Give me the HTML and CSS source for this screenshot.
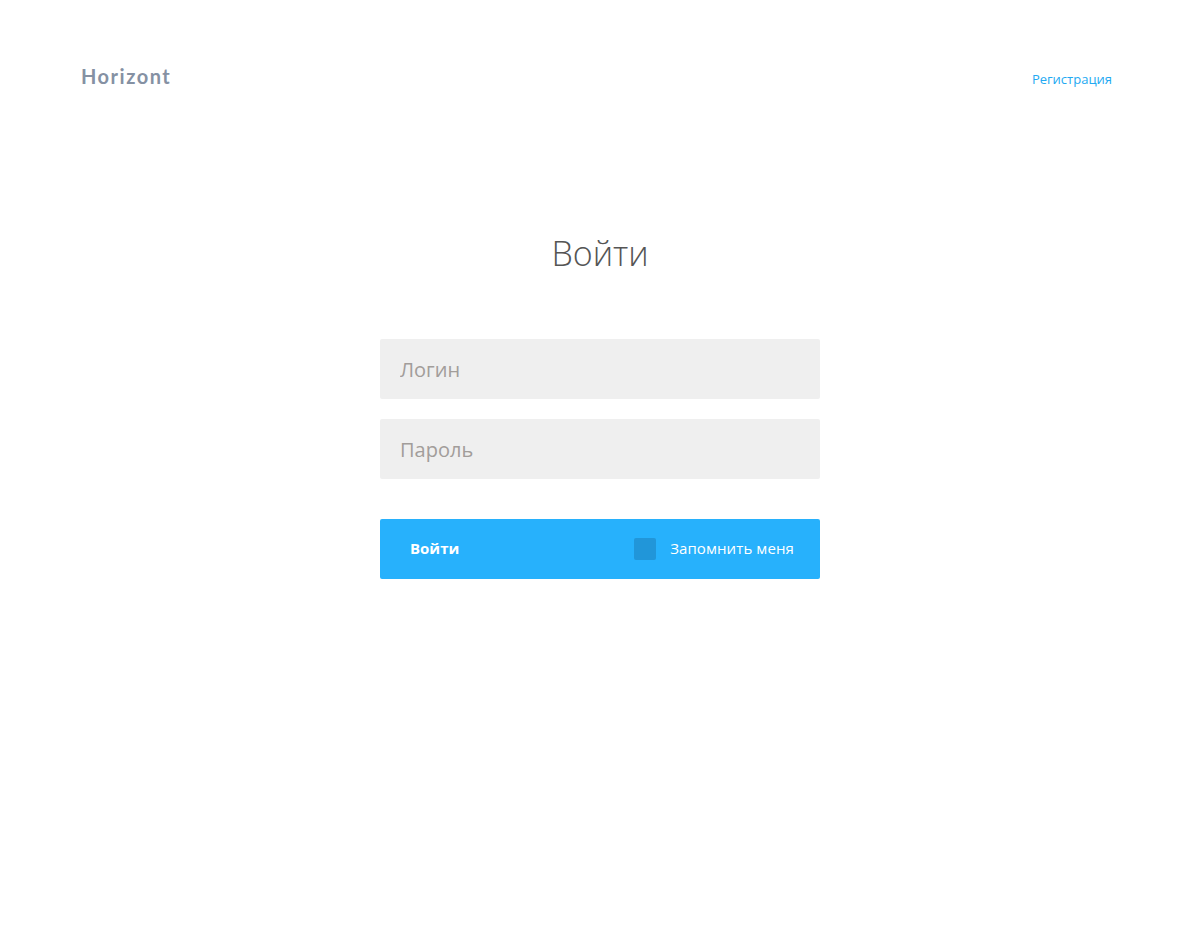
FILE: index.html
```html
<!DOCTYPE html>
<html lang="ru">
<head>
<meta charset="utf-8">
<title>Horizont — Войти</title>
<link rel="stylesheet" href="styles.css">
</head>
<body>
<header class="header">
  <div class="logo">Horizont</div>
  <a class="reg-link" href="#">Регистрация</a>
</header>
<main class="main">
  <h1 class="title">Войти</h1>
  <form class="form">
    <input class="field" type="text" placeholder="Логин">
    <input class="field" type="password" placeholder="Пароль">
    <div class="submit-bar">
      <button class="submit" type="button">Войти</button>
      <label class="remember"><span class="check"></span>Запомнить меня</label>
    </div>
  </form>
</main>
</body>
</html>
```

FILE: styles.css
```css
html, body {
  margin: 0;
  padding: 0;
  background: #fff;
  font-family: "Open Sans", "Liberation Sans", sans-serif;
}
.header {
  display: flex;
  justify-content: space-between;
  align-items: center;
  padding: 64px 88px 0 81px;
  height: 26px;
}
.logo {
  font-family: "Lato", "Liberation Sans", sans-serif;
  font-weight: 700;
  font-size: 20px;
  letter-spacing: 1.5px;
  color: #8591a3;
  margin-top: -3px;
}
.reg-link {
  font-size: 13px;
  color: #23a9f2;
  text-decoration: none;
  margin-top: 4px;
}
.main {
  display: flex;
  flex-direction: column;
  align-items: center;
}
.title {
  margin: 139px 0 0;
  font-weight: 300;
  font-size: 34px;
  line-height: 48px;
  color: #555;
}
.form {
  width: 440px;
  margin-top: 62px;
  display: flex;
  flex-direction: column;
}
.field {
  height: 60px;
  box-sizing: border-box;
  border: none;
  border-radius: 2px;
  background: #efefef;
  padding: 0 20px;
  font-family: "Open Sans", sans-serif;
  font-size: 20px;
  color: #555;
  margin-bottom: 20px;
  outline: none;
}
.field::placeholder {
  color: #a29d9a;
}
.submit-bar {
  margin-top: 20px;
  height: 60px;
  box-sizing: border-box;
  padding: 0 26px 2px 30px;
  background: #27b1fc;
  border-radius: 2px;
  display: flex;
  align-items: center;
  justify-content: space-between;
}
.submit {
  background: none;
  border: none;
  padding: 0;
  font-family: "Open Sans", sans-serif;
  font-weight: 700;
  font-size: 15px;
  color: #fff;
  cursor: pointer;
}
.remember {
  display: flex;
  align-items: center;
  font-size: 15px;
  letter-spacing: 0.1px;
  color: #fff;
}
.check {
  width: 22px;
  height: 22px;
  border-radius: 2px;
  background: #2196d9;
  margin-right: 14px;
  margin-top: 2px;
}
```
